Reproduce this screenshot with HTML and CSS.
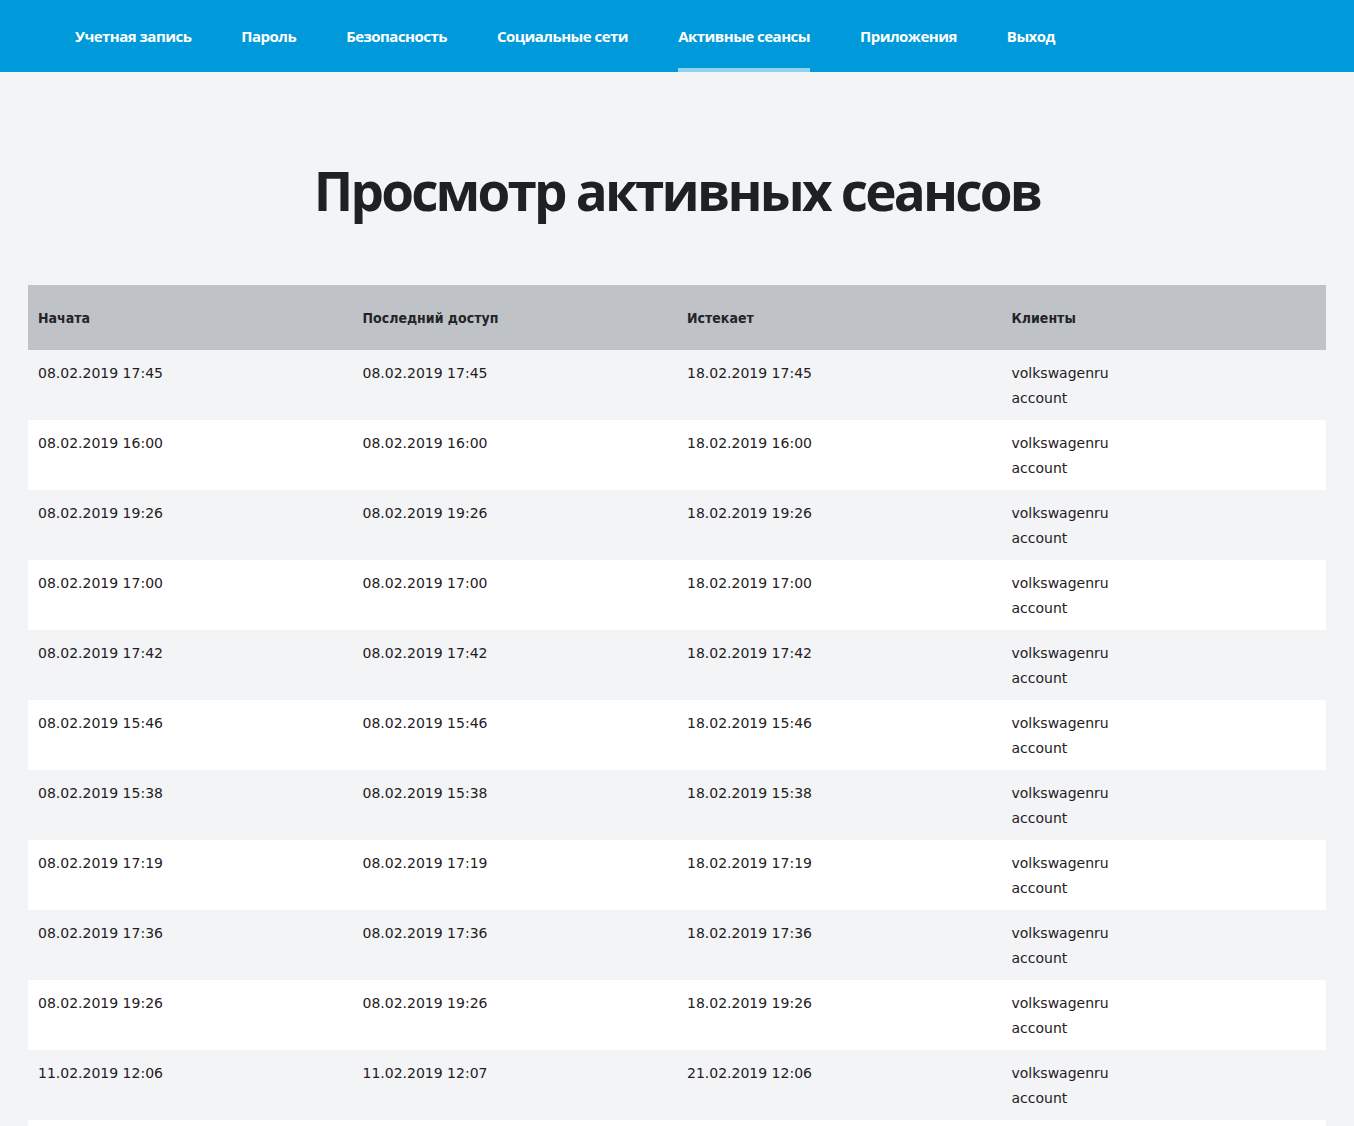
FILE: index.html
```html
<!DOCTYPE html>
<html lang="ru">
<head>
<meta charset="utf-8">
<title>Активные сеансы</title>
<link rel="stylesheet" href="styles.css">
</head>
<body>
<nav class="topnav">
  <a class="nav-item" href="#">Учетная запись</a>
  <a class="nav-item" href="#">Пароль</a>
  <a class="nav-item" href="#">Безопасность</a>
  <a class="nav-item" href="#">Социальные сети</a>
  <a class="nav-item active" href="#">Активные сеансы</a>
  <a class="nav-item" href="#">Приложения</a>
  <a class="nav-item" href="#">Выход</a>
</nav>
<main class="content">
  <h1 class="title">Просмотр активных сеансов</h1>
  <table class="sessions">
    <thead>
      <tr><th>Начата</th><th>Последний доступ</th><th>Истекает</th><th>Клиенты</th></tr>
    </thead>
    <tbody>
      <tr><td>08.02.2019 17:45</td><td>08.02.2019 17:45</td><td>18.02.2019 17:45</td><td>volkswagenru<br>account</td></tr>
      <tr><td>08.02.2019 16:00</td><td>08.02.2019 16:00</td><td>18.02.2019 16:00</td><td>volkswagenru<br>account</td></tr>
      <tr><td>08.02.2019 19:26</td><td>08.02.2019 19:26</td><td>18.02.2019 19:26</td><td>volkswagenru<br>account</td></tr>
      <tr><td>08.02.2019 17:00</td><td>08.02.2019 17:00</td><td>18.02.2019 17:00</td><td>volkswagenru<br>account</td></tr>
      <tr><td>08.02.2019 17:42</td><td>08.02.2019 17:42</td><td>18.02.2019 17:42</td><td>volkswagenru<br>account</td></tr>
      <tr><td>08.02.2019 15:46</td><td>08.02.2019 15:46</td><td>18.02.2019 15:46</td><td>volkswagenru<br>account</td></tr>
      <tr><td>08.02.2019 15:38</td><td>08.02.2019 15:38</td><td>18.02.2019 15:38</td><td>volkswagenru<br>account</td></tr>
      <tr><td>08.02.2019 17:19</td><td>08.02.2019 17:19</td><td>18.02.2019 17:19</td><td>volkswagenru<br>account</td></tr>
      <tr><td>08.02.2019 17:36</td><td>08.02.2019 17:36</td><td>18.02.2019 17:36</td><td>volkswagenru<br>account</td></tr>
      <tr><td>08.02.2019 19:26</td><td>08.02.2019 19:26</td><td>18.02.2019 19:26</td><td>volkswagenru<br>account</td></tr>
      <tr><td>11.02.2019 12:06</td><td>11.02.2019 12:07</td><td>21.02.2019 12:06</td><td>volkswagenru<br>account</td></tr>
      <tr class="blank"><td></td><td></td><td></td><td></td></tr>
    </tbody>
  </table>
</main>
</body>
</html>
```
FILE: styles.css
```css
html, body {
  margin: 0;
  padding: 0;
  background: #f3f4f6;
}
body {
  font-family: "DejaVu Sans", sans-serif;
  color: #1f2023;
}
.topnav {
  display: flex;
  align-items: stretch;
  height: 72px;
  background: #009ada;
  padding-left: 75px;
  gap: 50px;
}
.nav-item {
  display: flex;
  align-items: center;
  color: #ffffff;
  text-decoration: none;
  font-family: "Open Sans", sans-serif;
  font-weight: 700;
  font-size: 15px;
  letter-spacing: -0.52px;
  border-bottom: 4px solid transparent;
  padding-top: 3px;
  box-sizing: border-box;
}
.nav-item.active {
  border-bottom-color: #8fd3f0;
}
.content {
  padding: 0 28px;
}
.title {
  margin: 0;
  padding: 84px 0 59px;
  text-align: center;
  font-family: "Open Sans", sans-serif;
  font-weight: 700;
  font-size: 53px;
  line-height: 70px;
  letter-spacing: -2.8px;
  color: #1f2023;
}
.sessions {
  width: 100%;
  border-collapse: collapse;
  table-layout: fixed;
  font-size: 14px;
}
.sessions th {
  background: #bfc3c7;
  height: 65px;
  box-sizing: border-box;
  padding: 0 10px;
  text-align: left;
  font-family: "DejaVu Sans Condensed", "DejaVu Sans", sans-serif;
  font-weight: 700;
  font-size: 14px;
  color: #232427;
}
.sessions td {
  height: 70px;
  box-sizing: border-box;
  padding: 11px 10px 0;
  vertical-align: top;
  line-height: 25px;
}
.sessions tbody tr:nth-child(odd) td {
  background: #f3f4f6;
}
.sessions tbody tr:nth-child(even) td {
  background: #ffffff;
}
```
